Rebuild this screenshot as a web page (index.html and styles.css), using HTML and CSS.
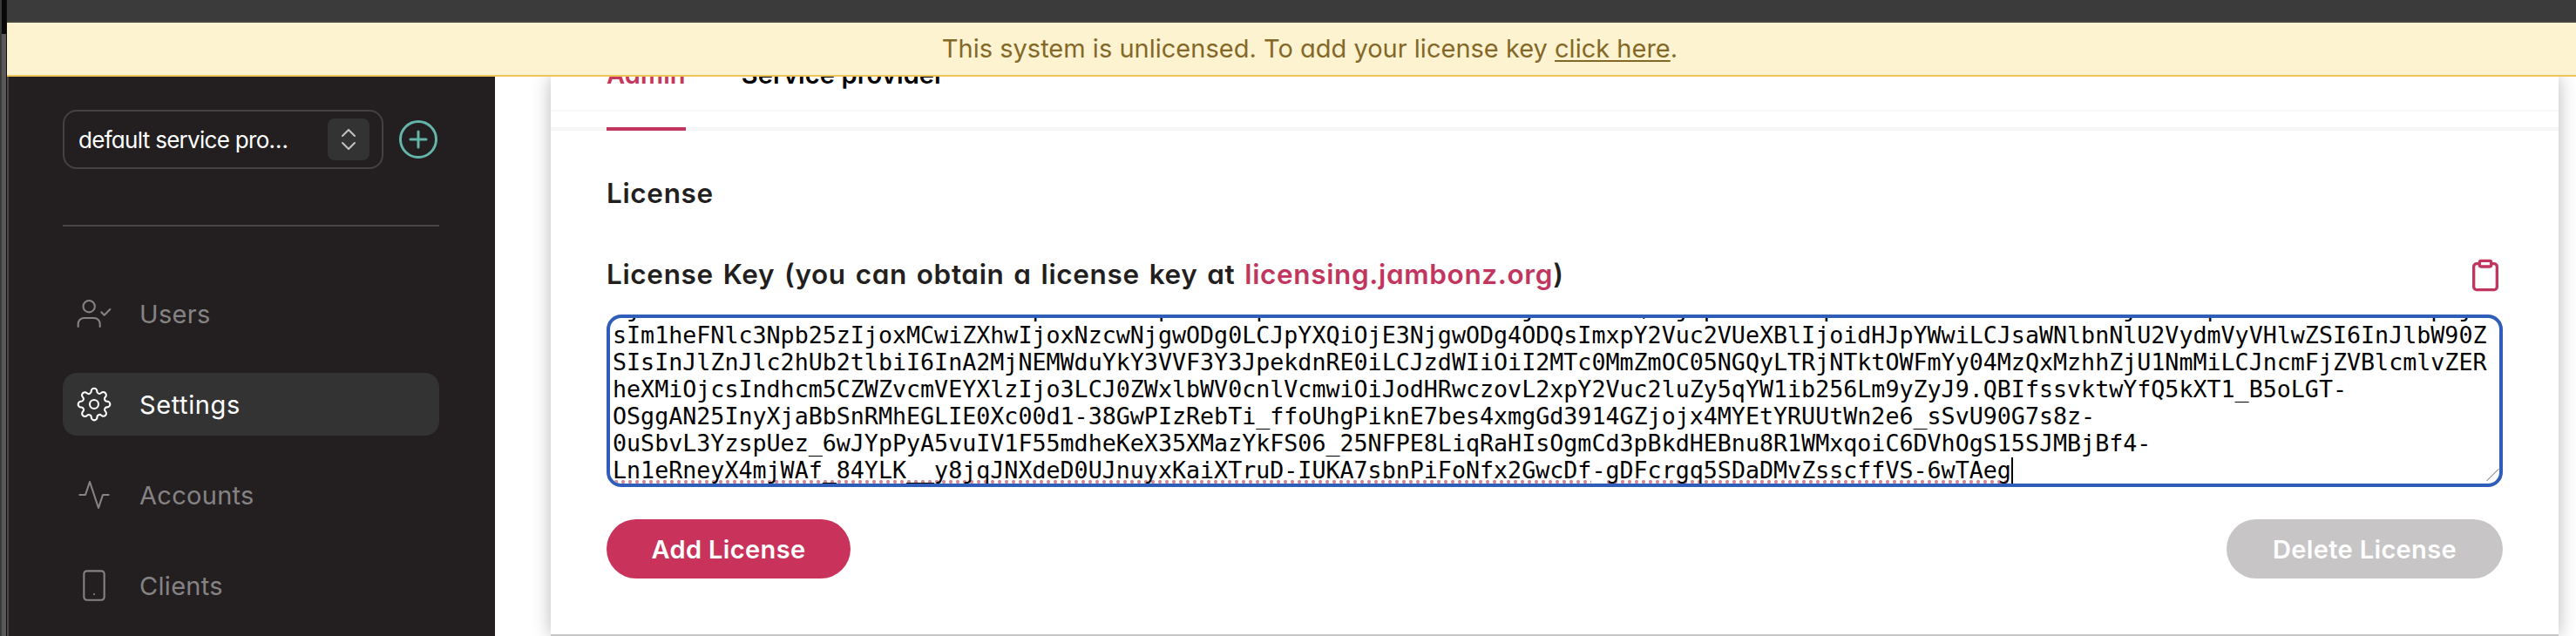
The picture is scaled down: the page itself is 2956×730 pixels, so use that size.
FILE: index.html
```html
<!DOCTYPE html>
<html lang="en">
<head>
  <meta charset="UTF-8">
  <meta name="viewport" content="width=device-width, initial-scale=1.0">
  <title>Settings</title>
  <link rel="stylesheet" href="styles.css">
</head>
<body>

<div class="window-edge"></div>
<div class="window">
  <div class="toolbar"></div>
  <div class="banner">
    <p>This system is unlicensed. To add your license key <a href="#">click here</a>.</p>
  </div>

  <div class="page">
    <nav class="sidebar">
      <div class="provider">
        <div class="provider-select">
          <span>default service pro…</span>
          <div class="provider-arrows">
            <svg viewBox="0 0 48 48"><polyline points="17 20 24 13 31 20"/><polyline points="17 28 24 35 31 28"/></svg>
          </div>
        </div>
        <svg class="provider-add" viewBox="0 0 44 44"><circle cx="22" cy="22" r="20.5"/><path d="M22 13v18M13 22h18"/></svg>
      </div>
      <ul class="menu">
        <li>
          <svg viewBox="0 0 24 24"><path d="M16 21v-2a4 4 0 0 0-4-4H5a4 4 0 0 0-4 4v2"/><circle cx="8.5" cy="7" r="4"/><polyline points="17 11 19 13 23 9"/></svg>
          <span>Users</span>
        </li>
        <li class="active">
          <svg viewBox="0 0 24 24"><circle cx="12" cy="12" r="3"/><path d="M19.4 15a1.65 1.65 0 0 0 .33 1.82l.06.06a2 2 0 0 1 0 2.83 2 2 0 0 1-2.83 0l-.06-.06a1.65 1.65 0 0 0-1.82-.33 1.65 1.65 0 0 0-1 1.51V21a2 2 0 0 1-2 2 2 2 0 0 1-2-2v-.09A1.65 1.65 0 0 0 9 19.4a1.65 1.65 0 0 0-1.82.33l-.06.06a2 2 0 0 1-2.83 0 2 2 0 0 1 0-2.83l.06-.06a1.65 1.65 0 0 0 .33-1.82 1.65 1.65 0 0 0-1.51-1H3a2 2 0 0 1-2-2 2 2 0 0 1 2-2h.09A1.65 1.65 0 0 0 4.6 9a1.65 1.65 0 0 0-.33-1.82l-.06-.06a2 2 0 0 1 0-2.83 2 2 0 0 1 2.83 0l.06.06a1.65 1.65 0 0 0 1.82.33H9a1.65 1.65 0 0 0 1-1.51V3a2 2 0 0 1 2-2 2 2 0 0 1 2 2v.09a1.65 1.65 0 0 0 1 1.51 1.65 1.65 0 0 0 1.82-.33l.06-.06a2 2 0 0 1 2.83 0 2 2 0 0 1 0 2.83l-.06.06a1.65 1.65 0 0 0-.33 1.82V9a1.65 1.65 0 0 0 1.51 1H21a2 2 0 0 1 2 2 2 2 0 0 1-2 2h-.09a1.65 1.65 0 0 0-1.51 1z"/></svg>
          <span>Settings</span>
        </li>
        <li>
          <svg viewBox="0 0 24 24"><polyline points="22 12 18 12 15 21 9 3 6 12 2 12"/></svg>
          <span>Accounts</span>
        </li>
        <li>
          <svg viewBox="0 0 24 24"><rect x="5" y="2" width="14" height="20" rx="2"/><path d="M12 18h.01"/></svg>
          <span>Clients</span>
        </li>
      </ul>
    </nav>

    <main class="content">
      <div class="card">
        <div class="tabs">
          <span class="tab tab-active">Admin</span>
          <span class="tab">Service provider</span>
        </div>
        <div class="license">
          <h2>License</h2>
          <div class="license-label">
            <label>License Key (you can obtain a license key at <a href="#">licensing.jambonz.org</a>)</label>
            <svg class="clipboard" viewBox="0 0 24 24"><path d="M16 4h2a2 2 0 0 1 2 2v14a2 2 0 0 1-2 2H6a2 2 0 0 1-2-2V6a2 2 0 0 1 2-2h2"/><rect x="8" y="2" width="8" height="4" rx="1"/></svg>
          </div>
          <div class="key-box">
<pre>IjoiOWFmOC05NGU0LTRhMzctOWUxZSpbnN0YWxspZWRCeSpbWFlsIoiZGF2ZUBkcmjb3JtYWxQbmjhpciLCJlbqYWlsIoiZGF2ZUBkcmFWNkjbWVucpdGVzdiOiJhbmFsbpbjc
sIm1heFNlc3Npb25zIjoxMCwiZXhwIjoxNzcwNjgwODg0LCJpYXQiOjE3NjgwODg4ODQsImxpY2Vuc2VUeXBlIjoidHJpYWwiLCJsaWNlbnNlU2VydmVyVHlwZSI6InJlbW90Z
SIsInJlZnJlc2hUb2tlbiI6InA2MjNEMWduYkY3VVF3Y3JpekdnRE0iLCJzdWIiOiI2MTc0MmZmOC05NGQyLTRjNTktOWFmYy04MzQxMzhhZjU1NmMiLCJncmFjZVBlcmlvZER
heXMiOjcsIndhcm5CZWZvcmVEYXlzIjo3LCJ0ZWxlbWV0cnlVcmwiOiJodHRwczovL2xpY2Vuc2luZy5qYW1ib256Lm9yZyJ9.QBIfssvktwYfQ5kXT1_B5oLGT-
OSggAN25InyXjaBbSnRMhEGLIE0Xc00d1-38GwPIzRebTi_ffoUhgPiknE7bes4xmgGd3914GZjojx4MYEtYRUUtWn2e6_sSvU90G7s8z-
0uSbvL3YzspUez_6wJYpPyA5vuIV1F55mdheKeX35XMazYkFS06_25NFPE8LiqRaHIsOgmCd3pBkdHEBnu8R1WMxqoiC6DVhOgS15SJMBjBf4-
<span class="misspelled">Ln1eRneyX4mjWAf_84YLK__y8jqJNXdeD0UJnuyxKaiXTruD-IUKA7sbnPiFoNfx2GwcDf</span>-<span class="misspelled">gDFcrgq5SDaDMvZsscffVS-6wTAeg</span><i class="caret"></i></pre>
            <svg class="grip" viewBox="0 0 16 16"><path d="M1 15L15 1"/></svg>
          </div>
          <div class="buttons">
            <button class="add">Add License</button>
            <button class="delete" disabled>Delete License</button>
          </div>
        </div>
      </div>
    </main>
  </div>
</div>

</body>
</html>
```
FILE: styles.css
```css
* {
  box-sizing: border-box;
}

body {
  margin: 0;
  height: 730px;
  display: flex;
  overflow: hidden;
  background: #fff;
  font-family: Inter, "Liberation Sans", sans-serif;
  font-feature-settings: "cv11";
}

svg {
  fill: none;
  stroke: currentColor;
  stroke-linecap: round;
  stroke-linejoin: round;
}

/* strip of the window behind */
.window-edge {
  width: 8px;
  flex: none;
  border-left: 2px solid #3a3a3a;
  border-right: 1px solid #111;
  background: linear-gradient(#080808 39px, #5b5859 39px);
}

.window {
  flex: 1;
  min-width: 0;
  display: flex;
  flex-direction: column;
}

.toolbar {
  height: 26px;
  flex: none;
  background: #3b3b3b;
  border-bottom: 2px solid #46453d;
}

.banner {
  height: 62px;
  flex: none;
  display: flex;
  align-items: center;
  justify-content: center;
  padding-left: 42px;
  background: #fdf3d0;
  border-bottom: 2px solid #efc458;
  color: #846828;
}

.banner p {
  margin: 0;
  font-size: 29px;
  line-height: 40px;
  letter-spacing: 0.01px;
  white-space: nowrap;
}

.banner a {
  color: inherit;
  text-decoration-thickness: 2px;
  text-underline-offset: 3px;
}

.page {
  flex: 1;
  min-height: 0;
  display: flex;
}

.sidebar {
  width: 560px;
  flex: none;
  padding: 38px 64px 0 62px;
  border-left: 2px solid #48474a;
  background: #231f20;
}

.provider {
  height: 134px;
  display: flex;
  align-items: flex-start;
  border-bottom: 2px solid #484647;
}

.provider-select {
  width: 368px;
  height: 68px;
  display: flex;
  align-items: center;
  justify-content: space-between;
  padding: 0 14px 0 16px;
  border: 2px solid #444243;
  border-radius: 16px;
  color: #fff;
  font-size: 26px;
  letter-spacing: -0.7px;
}

.provider-arrows {
  width: 48px;
  height: 48px;
  border-radius: 8px;
  background: #333;
  color: #c4c2c3;
}

.provider-arrows svg {
  display: block;
  stroke-width: 2;
}

.provider-add {
  width: 44px;
  height: 44px;
  margin: 12px 0 0 18px;
  color: #62b5a8;
  stroke-width: 3;
}

.menu {
  list-style: none;
  margin: 64px 0 0;
  padding: 0;
  display: grid;
  gap: 32px;
}

.menu li {
  height: 72px;
  display: flex;
  align-items: center;
  gap: 32px;
  padding-left: 16px;
  border-radius: 16px;
  color: #858384;
  font-size: 29px;
  letter-spacing: 0.3px;
}

.menu .active {
  background: #333;
  color: #fff;
  letter-spacing: 0.6px;
}

.menu svg {
  width: 40px;
  height: 40px;
  stroke-width: 1.25;
}

.content {
  flex: 1;
  min-width: 0;
  padding: 0 20px 0 64px;
  overflow: hidden;
}

.card {
  height: 642px;
  background: #fff;
  border-bottom: 2px solid #c6c6c6;
  box-shadow: 0 0 20px rgba(0, 0, 0, 0.28);
}

/* the tab row is scrolled up under the banner */
.tabs {
  height: 62px;
  display: flex;
  align-items: flex-end;
  gap: 64px;
  padding-left: 64px;
  border-bottom: 4px solid #f6f6f6;
  background: linear-gradient(#f8f8f8, #f8f8f8) 0 38px / 100% 2px no-repeat;
}

.tab {
  height: 82px;
  margin-bottom: -4px;
  flex: none;
  font-size: 29px;
  font-weight: 600;
  line-height: 36px;
  letter-spacing: 0.1px;
  color: #000;
  border-bottom: 4px solid transparent;
}

.tab-active {
  color: #c4375f;
  border-color: #c1355e;
}

.license {
  padding: 0 64px;
  color: #231f20;
}

.license h2,
.license-label {
  font-size: 31.5px;
  font-weight: 600;
  letter-spacing: 0.65px;
  word-spacing: 2.3px;
}

.license h2 {
  margin: 0;
  padding-top: 52px;
  line-height: 40px;
}

.license-label {
  margin-top: 52px;
  height: 44px;
  display: flex;
  align-items: center;
  justify-content: space-between;
}

.license-label label {
  margin-top: -3px;
}

.license-label a {
  color: #c1355e;
  text-decoration: none;
}

.clipboard {
  width: 40px;
  height: 40px;
  color: #c1355e;
  stroke-width: 2;
}

.key-box {
  position: relative;
  height: 198px;
  margin-top: 23px;
  padding-left: 3px;
  display: flex;
  align-items: flex-end;
  overflow: hidden;
  border: 4px solid #2e5eb9;
  border-radius: 17px;
}

.key-box pre {
  margin: 0;
  font-family: "DejaVu Sans Mono", monospace;
  font-size: 26.667px;
  line-height: 31px;
  color: #000;
}

.misspelled {
  background: radial-gradient(circle at 4px 2px, #d58a92 1.8px, transparent 2.4px) 0 100% / 8px 4px repeat-x;
}

.caret {
  display: inline-block;
  width: 2px;
  height: 30px;
  vertical-align: bottom;
  background: #000;
}

.grip {
  position: absolute;
  right: 0;
  bottom: 0;
  width: 15px;
  height: 20px;
  color: #555;
}

.buttons {
  display: flex;
  justify-content: space-between;
  margin-top: 37px;
}

.buttons button {
  height: 68px;
  padding: 0;
  border: 0;
  border-radius: 34px;
  font: inherit;
  font-size: 29px;
  font-weight: 600;
  letter-spacing: 0.35px;
  color: #fff;
}

.add {
  width: 280px;
  background: #c9335b;
}

.delete {
  width: 317px;
  background: #c7c5c6;
}
```
